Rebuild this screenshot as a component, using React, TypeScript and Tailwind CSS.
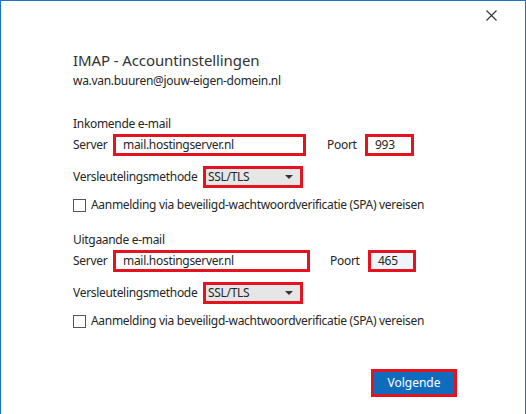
import React from "react";

const font = "font-['Segoe_UI','Noto_Sans',sans-serif]";

const Field = ({ value, width, tint }: { value: string; width: string; tint?: boolean }) => (
  <div
    className={`${width} h-[22px] border-[3px] border-[#e5121f] flex items-center pl-[7px] text-[12px] tracking-[-0.3px] ${
      tint ? "bg-[#eef5fd]" : "bg-white"
    }`}
  >
    {value}
  </div>
);

const Select = ({ value }: { value: string }) => (
  <div className="w-[100px] h-[22px] border-[3px] border-[#e5121f] bg-[#e6e6e6] flex items-center justify-between pl-[2px] pr-[7px] text-[12px] tracking-[-0.3px]">
    <span>{value}</span>
    <svg width="8" height="4" viewBox="0 0 8 4">
      <path d="M0 0h8L4 4z" fill="#333" />
    </svg>
  </div>
);

const Checkbox = ({ label }: { label: string }) => (
  <div className="flex items-center h-[14px]">
    <div className="w-[13px] h-[13px] border border-[#555] bg-white" />
    <span className="ml-[5px] text-[12px] leading-[14px] tracking-[-0.3px]">{label}</span>
  </div>
);

const Section = ({
  title,
  top,
  box,
  portGap,
  port,
  portWidth,
  tint,
}: {
  title: string;
  top: string;
  box: string;
  portGap: string;
  port: string;
  portWidth: string;
  tint?: boolean;
}) => (
  <div className={`${top} text-[12px] tracking-[-0.3px]`}>
    <div className="leading-[18px]">{title}</div>
    <div className="flex items-center mt-[1px]">
      <span className="w-[40px]">Server</span>
      <Field value="mail.hostingserver.nl" width={box} />
      <span className={`${portGap} w-[38px]`}>Poort</span>
      <Field value={port} width={portWidth} tint={tint} />
    </div>
    <div className="flex items-center mt-[10px]">
      <span className="w-[130px]">Versleutelingsmethode</span>
      <Select value="SSL/TLS" />
    </div>
    <div className="mt-[10px]">
      <Checkbox label="Aanmelding via beveiligd-wachtwoordverificatie (SPA) vereisen" />
    </div>
  </div>
);

export default function App() {
  return (
    <div
      className={`w-[526px] h-[414px] bg-white border-l border-t border-r border-[#1a73c9] flex flex-col text-[#262626] ${font}`}
    >
      <div className="flex justify-end pt-[9px] pr-[28px]">
        <svg width="11" height="11" viewBox="0 0 11 11">
          <path d="M0.5 0.5l10 10M10.5 0.5l-10 10" stroke="#333" strokeWidth="1.1" />
        </svg>
      </div>

      <div className="pl-[72px]">
        <div className="mt-[29px] text-[15px] leading-[20px] tracking-[-0.1px] text-[#333]">
          IMAP - Accountinstellingen
        </div>
        <div className="mt-[2px] text-[12px] leading-[18px] tracking-[-0.3px]">
          wa.van.buuren@jouw-eigen-domein.nl
        </div>

        <Section
          title="Inkomende e-mail"
          top="mt-[25px]"
          box="w-[193px]"
          portGap="ml-[21px]"
          port="993"
          portWidth="w-[49px]"
        />
        <Section
          title="Uitgaande e-mail"
          top="mt-[19px]"
          box="w-[197px]"
          portGap="ml-[20px]"
          port="465"
          portWidth="w-[48px]"
          tint
        />
      </div>

      <div className="flex justify-end pr-[68px] mt-[41px]">
        <button className="w-[86px] h-[28px] border-[3px] border-[#e5121f] bg-[#0f6cbd] text-white text-[12px] flex items-center justify-center">
          Volgende
        </button>
      </div>
    </div>
  );
}
